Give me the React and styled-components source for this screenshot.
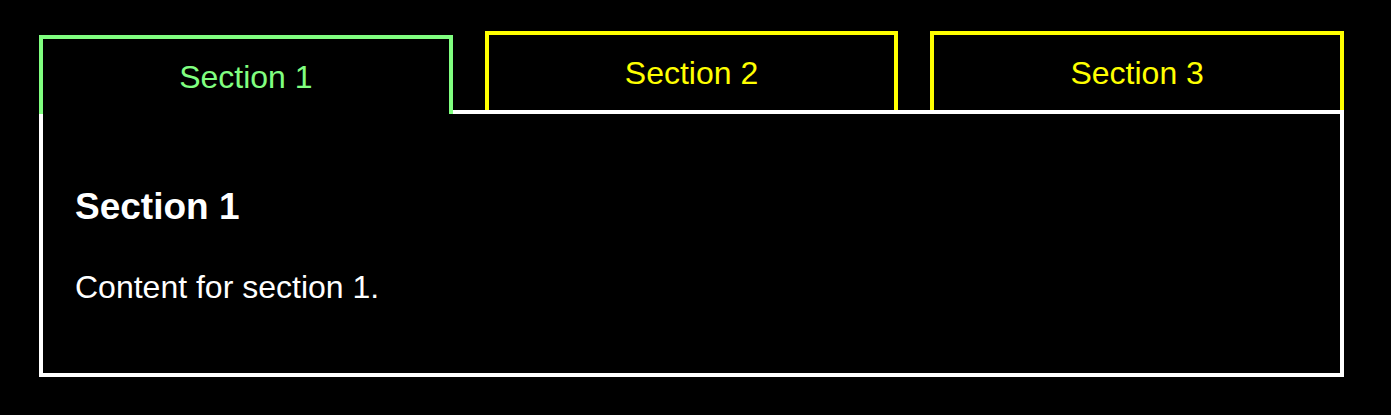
import styled, { createGlobalStyle } from 'styled-components'
import { useState } from 'react'

const GlobalStyle = createGlobalStyle`
    html, body {
        margin: 0;
        padding: 0;
        background: #000;
    }
    body {
        font-family: "Liberation Sans", Arial, sans-serif;
        color: #FFF;
    }
`

const Pagina = styled.main`
    width: 1305px;
    padding: 31px 0 39px 39px;
`

const Abas = styled.div`
    display: flex;
    align-items: flex-end;
    gap: 32px;
`

const Aba = styled.button`
    flex: 1;
    height: 79px;
    padding: 2px 0 0;
    background: #000;
    border: 4px solid ${props => props.ativa ? '#80FF80' : '#FFFF00'};
    border-bottom: none;
    color: ${props => props.ativa ? '#80FF80' : '#FFFF00'};
    font-family: "Liberation Sans", Arial, sans-serif;
    font-size: 32px;
    cursor: pointer;
    position: relative;
    z-index: ${props => props.ativa ? 1 : 0};
    margin-bottom: ${props => props.ativa ? '-4px' : '0'};
`

const Painel = styled.section`
    border: 4px solid #FFF;
    padding: 72px 32px 67px;
`

const Titulo = styled.h2`
    margin: 0 0 41px;
    font-size: 37px;
    line-height: 42px;
    font-weight: 700;
`

const Texto = styled.p`
    margin: 0;
    font-size: 32px;
    line-height: 37px;
`

const secoes = [1, 2, 3]

function App() {
    const [ativa, setAtiva] = useState(1)

    return (
        <Pagina>
            <GlobalStyle />
            <Abas>
                {secoes.map(n => (
                    <Aba key={n} ativa={ativa === n} onClick={() => setAtiva(n)}>
                        Section {n}
                    </Aba>
                ))}
            </Abas>
            <Painel>
                <Titulo>Section {ativa}</Titulo>
                <Texto>Content for section {ativa}.</Texto>
            </Painel>
        </Pagina>
    )
}

export default App
